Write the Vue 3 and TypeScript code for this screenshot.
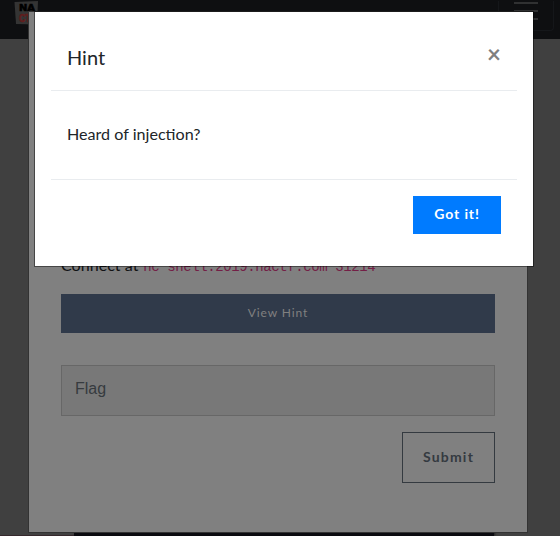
<script setup lang="ts">
import { ref } from 'vue'

const command = 'nc shell.2019.nactf.com 31214'
const hint = 'Heard of injection?'
const flag = ref('')
const hintOpen = ref(true)
</script>

<template>
  <div class="page">
    <header class="navbar">
      <svg class="logo" width="26" height="25" viewBox="0 0 26 25">
        <path d="M0.500 1 24 0l-1 23.500-21-.5z" fill="#343434" />
        <text x="5" y="10" textLength="16" lengthAdjust="spacingAndGlyphs" class="logo-top">NA</text>
        <text x="5" y="20.500" textLength="17" lengthAdjust="spacingAndGlyphs" class="logo-bottom">CTF</text>
      </svg>
      <div class="toggler"><i /><i /><i /></div>
    </header>
    <div class="panel-below" />
    <div class="baseline" />

    <main class="challenge">
      <p class="connect">Connect at <code>{{ command }}</code></p>
      <button class="view-hint" @click="hintOpen = true">View Hint</button>
      <input v-model="flag" class="flag" type="text" placeholder="Flag" />
      <button class="submit">Submit</button>
    </main>

    <section v-if="hintOpen" class="modal">
      <div class="modal-header">
        <h5>Hint</h5>
        <button class="close" aria-label="Close" @click="hintOpen = false">×</button>
      </div>
      <div class="modal-body">{{ hint }}</div>
      <div class="modal-footer">
        <button class="got-it" @click="hintOpen = false">Got it!</button>
      </div>
    </section>
  </div>
</template>

<style>
body {
  margin: 0;
  overflow: hidden;
}
</style>

<style scoped>
* {
  box-sizing: border-box;
}
.page {
  position: relative;
  width: 560px;
  height: 536px;
  overflow: hidden;
  background: #404040;
  font: 16px/24px Lato, sans-serif;
  color: #212529;
}
button {
  font-family: Lato, sans-serif;
  border-radius: 0;
  padding: 0;
}
.navbar {
  display: flex;
  justify-content: space-between;
  height: 39px;
  padding: 1px 6px 0 14px;
  background: #0e0f11;
}
.logo-top,
.logo-bottom {
  font: bold 9.500px "DejaVu Sans", sans-serif;
  fill: #000;
  stroke: #000;
  stroke-width: 0.6px;
}
.logo-bottom {
  font: bold 10.500px "Liberation Sans", sans-serif;
  fill: #611d1d;
  stroke: #611d1d;
}
.toggler {
  display: flex;
  flex-direction: column;
  align-items: center;
  gap: 6px;
  width: 56px;
  height: 30px;
  padding-top: 1px;
  border: 1px solid #15171a;
  border-top: 0;
  border-radius: 0 0 4px 4px;
}
.toggler i {
  width: 24px;
  height: 2px;
  background: #303132;
}
.panel-below {
  position: absolute;
  left: 74px;
  top: 500px;
  width: 420px;
  height: 36px;
  background: #0b0b10;
  box-shadow: 1px 0 2px #202022;
}
.baseline {
  position: absolute;
  left: 0;
  bottom: 0;
  width: 74px;
  height: 1px;
  background: #36292d;
}
.challenge {
  position: absolute;
  left: 28px;
  top: 11px;
  width: 500px;
  height: 522px;
  display: flex;
  flex-direction: column;
  padding: 241px 32px 0;
  border: 1px solid #333;
  background: #808080;
  background-clip: padding-box;
}
.connect {
  margin: 0 0 15px;
  color: #101214;
  font-size: 16.100px;
}
.connect code {
  margin-left: 0.600px;
  font: 14px/24px "Liberation Mono", monospace;
  letter-spacing: -0.4px;
  color: #741f46;
}
.view-hint {
  height: 39px;
  padding-bottom: 2px;
  border: 0;
  background: #303a4a;
  color: #808080;
  font-size: 12px;
  letter-spacing: 0.900px;
}
.flag {
  width: 100%;
  height: 51px;
  margin: 32px 0 16px;
  padding: 0 13px 4px;
  border: 1px solid #676767;
  border-radius: 0;
  background: #787878;
  font: 16px "Liberation Sans", sans-serif;
}
.flag::placeholder {
  color: #363b3f;
  opacity: 1;
}
.submit {
  align-self: flex-end;
  width: 93px;
  height: 51px;
  padding-bottom: 2px;
  border: 1px solid #343a40;
  background: transparent;
  color: #343a40;
  font-size: 14px;
  font-weight: 700;
  letter-spacing: 1.200px;
}
.modal {
  position: absolute;
  left: 34px;
  top: 11px;
  width: 500px;
  height: 256px;
  padding: 0 16px;
  border: 1px solid rgba(0, 0, 0, 0.45);
  background: #fff;
  background-clip: padding-box;
}
.modal-header {
  display: flex;
  justify-content: space-between;
  height: 79px;
  padding: 30px 16px 0;
  border-bottom: 1px solid #e9ecef;
}
.modal-header h5 {
  margin: 0;
  font-size: 20px;
  line-height: 30px;
  font-weight: 400;
}
.close {
  width: 14px;
  height: 24px;
  border: 0;
  background: none;
  color: #7f7f7f;
  font-size: 24px;
  line-height: 24px;
  font-weight: 700;
}
.modal-body {
  height: 89px;
  padding: 31px 16px;
  border-bottom: 1px solid #e9ecef;
  font-size: 16.120px;
}
.modal-footer {
  display: flex;
  justify-content: flex-end;
  padding: 16px 16px 0;
}
.got-it {
  width: 88px;
  height: 38px;
  padding-bottom: 3px;
  border: 0;
  background: #007bff;
  color: #fff;
  font-size: 14px;
  font-weight: 700;
  letter-spacing: 0.900px;
}
</style>
